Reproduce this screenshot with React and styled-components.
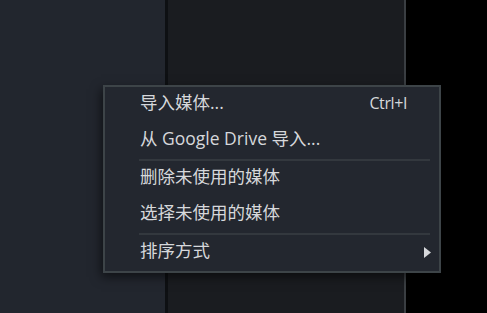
import React from 'react'
import styled, { createGlobalStyle } from 'styled-components'

const GlobalStyle = createGlobalStyle`
    html, body, #root {
        margin: 0;
        padding: 0;
        width: 100%;
        height: 100%;
        overflow: hidden;
        background: #000;
    }
    body {
        font-family: "Open Sans", "Noto Sans CJK SC", sans-serif;
    }
`

const Workspace = styled.div`
    position: relative;
    display: flex;
    width: 487px;
    height: 313px;
    background: #000;
`
const MediaBin = styled.div`
    width: 165px;
    background: #22262e;
`
const Divider = styled.div`
    width: 3px;
    background: #0e1013;
`
const Canvas = styled.div`
    width: 236px;
    background: #1a1c20;
    border-right: 2px solid #3a3e42;
`
const Rest = styled.div`
    flex: 1;
    background: #000;
`

const Menu = styled.ul`
    position: absolute;
    left: 103px;
    top: 85px;
    width: 334px;
    margin: 0;
    padding: 0;
    list-style: none;
    background: #23272f;
    border: 2px solid #3d4448;
    box-shadow: -2px 4px 10px rgba(0, 0, 0, 0.55);
`
const Item = styled.li`
    display: flex;
    align-items: center;
    justify-content: space-between;
    height: 36px;
    padding: 0 ${p => (p.submenu ? '8px' : '32px')} 0 35px;
    color: #d6d8db;
    font-size: 17.5px;
    line-height: 1;
    cursor: default;
    transform: translateY(-2px);
`
const Label = styled.span`
    white-space: nowrap;
`
const Shortcut = styled.span`
    font-family: "Open Sans", sans-serif;
    font-size: 16px;
    letter-spacing: -0.4px;
`
const Separator = styled.li`
    height: 2px;
    margin: 0 9px 0 34px;
    background: #33383e;
`
const Arrow = styled.svg`
    width: 7px;
    height: 11px;
    display: block;
    margin-top: 3px;
`

function ContextMenu() {
    return (
        <Menu>
            <Item>
                <Label>导入媒体...</Label>
                <Shortcut>Ctrl+I</Shortcut>
            </Item>
            <Item>
                <Label>从 Google Drive 导入...</Label>
            </Item>
            <Separator />
            <Item>
                <Label>删除未使用的媒体</Label>
            </Item>
            <Item>
                <Label>选择未使用的媒体</Label>
            </Item>
            <Separator />
            <Item submenu>
                <Label>排序方式</Label>
                <Arrow viewBox="0 0 7 11">
                    <path d="M0 0 L7 5.5 L0 11 Z" fill="#d6d8db" />
                </Arrow>
            </Item>
        </Menu>
    )
}

export default function App() {
    return (
        <>
            <GlobalStyle />
            <Workspace>
                <MediaBin />
                <Divider />
                <Canvas />
                <Rest />
                <ContextMenu />
            </Workspace>
        </>
    )
}
